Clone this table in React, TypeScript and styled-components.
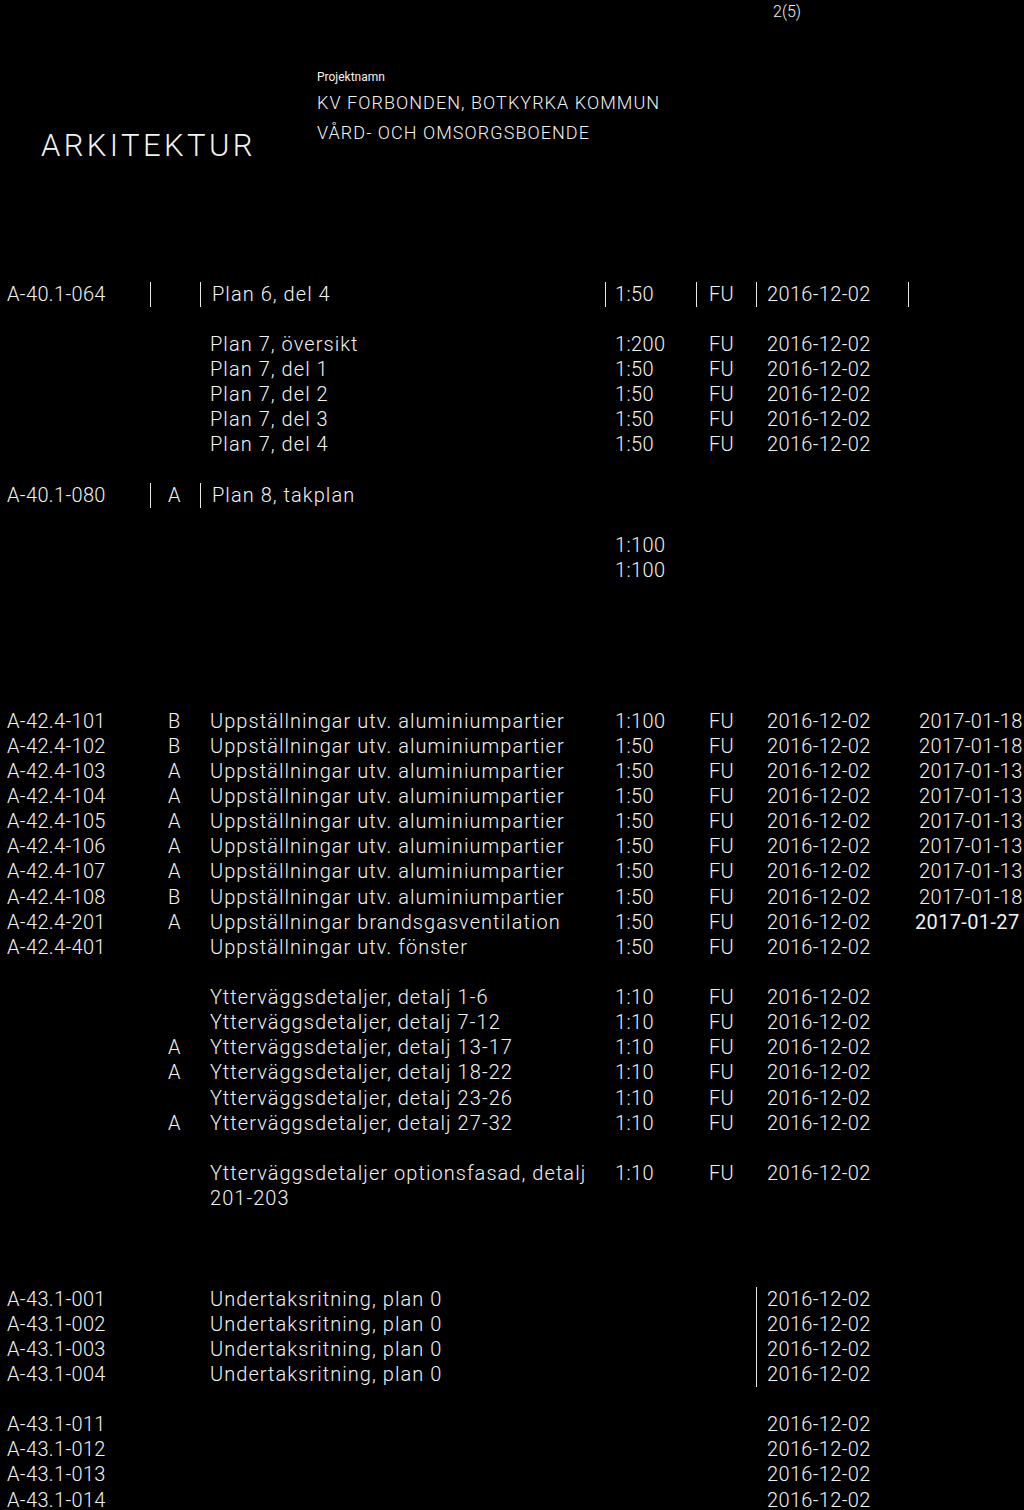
import styled, { createGlobalStyle } from "styled-components";

const GlobalStyle = createGlobalStyle`
  html, body {
    margin: 0;
    padding: 0;
    background: #000;
  }
  body {
    font-family: Roboto, "Liberation Sans", sans-serif;
    font-weight: 300;
    color: #f2f2f2;
  }
`;

const ROW_HEIGHT = "25.125px";

const Page = styled.div`
  width: 1024px;
  height: 1510px;
  overflow: hidden;
  background: #000;
  padding-left: 6px;
  box-sizing: border-box;
`;

const PageNumber = styled.div`
  height: 24px;
  line-height: 24px;
  padding-left: 767px;
  font-size: 16px;
`;

const ProjectHeader = styled.header`
  display: grid;
  grid-template-columns: 311px 1fr;
  margin-top: 45px;
  height: 212.5px;
  align-items: start;
`;

const Discipline = styled.div`
  margin-top: 59px;
  padding-left: 35px;
  font-size: 31px;
  line-height: 36px;
  letter-spacing: 3.4px;
`;

const ProjectInfo = styled.div`
  display: flex;
  flex-direction: column;
`;

const ProjectLabel = styled.div`
  font-size: 12px;
  line-height: 16px;
  font-weight: 400;
`;

const ProjectLine = styled.div<{ $height: number }>`
  font-size: 18px;
  line-height: ${({ $height }) => $height}px;
  letter-spacing: 1.05px;
`;

const Register = styled.div`
  display: flex;
  flex-direction: column;
`;

const Row = styled.div`
  display: grid;
  grid-template-columns: 144px 50px 405px 91px 60px 152px 1fr;
  min-height: ${ROW_HEIGHT};
  line-height: ${ROW_HEIGHT};
  font-size: 20px;
  letter-spacing: 0.35px;
  white-space: nowrap;
`;

const Cell = styled.div<{ $pad?: number; $bar?: boolean; $strong?: boolean }>`
  box-sizing: border-box;
  padding-left: ${({ $pad = 0 }) => $pad}px;
  border-left: ${({ $bar }) => ($bar ? "1.5px solid #e6e6e6" : "1.5px solid transparent")};
  font-weight: ${({ $strong }) => ($strong ? 400 : 300)};
`;

const TitleCell = styled(Cell)`
  white-space: normal;
  padding-right: 8px;
  letter-spacing: 1.05px;
`;

type Entry = {
  num?: string;
  rev?: string;
  title?: string;
  scale?: string;
  status?: string;
  date?: string;
  revDate?: string;
  strongRevDate?: boolean;
  bars?: "all" | "lead" | "date";
};

const D = "2016-12-02";
const blank: Entry = {};
const alu = "Uppställningar utv. aluminiumpartier";
const ytter = "Ytterväggsdetaljer, detalj";

const entries: Entry[] = [
  { num: "A-40.1-064", title: "Plan 6, del 4", scale: "1:50", status: "FU", date: D, bars: "all" },
  blank,
  { title: "Plan 7, översikt", scale: "1:200", status: "FU", date: D },
  { title: "Plan 7, del 1", scale: "1:50", status: "FU", date: D },
  { title: "Plan 7, del 2", scale: "1:50", status: "FU", date: D },
  { title: "Plan 7, del 3", scale: "1:50", status: "FU", date: D },
  { title: "Plan 7, del 4", scale: "1:50", status: "FU", date: D },
  blank,
  { num: "A-40.1-080", rev: "A", title: "Plan 8, takplan", bars: "lead" },
  blank,
  { scale: "1:100" },
  { scale: "1:100" },
  blank,
  blank,
  blank,
  blank,
  blank,
  { num: "A-42.4-101", rev: "B", title: alu, scale: "1:100", status: "FU", date: D, revDate: "2017-01-18" },
  { num: "A-42.4-102", rev: "B", title: alu, scale: "1:50", status: "FU", date: D, revDate: "2017-01-18" },
  { num: "A-42.4-103", rev: "A", title: alu, scale: "1:50", status: "FU", date: D, revDate: "2017-01-13" },
  { num: "A-42.4-104", rev: "A", title: alu, scale: "1:50", status: "FU", date: D, revDate: "2017-01-13" },
  { num: "A-42.4-105", rev: "A", title: alu, scale: "1:50", status: "FU", date: D, revDate: "2017-01-13" },
  { num: "A-42.4-106", rev: "A", title: alu, scale: "1:50", status: "FU", date: D, revDate: "2017-01-13" },
  { num: "A-42.4-107", rev: "A", title: alu, scale: "1:50", status: "FU", date: D, revDate: "2017-01-13" },
  { num: "A-42.4-108", rev: "B", title: alu, scale: "1:50", status: "FU", date: D, revDate: "2017-01-18" },
  {
    num: "A-42.4-201",
    rev: "A",
    title: "Uppställningar brandsgasventilation",
    scale: "1:50",
    status: "FU",
    date: D,
    revDate: "2017-01-27",
    strongRevDate: true,
  },
  { num: "A-42.4-401", title: "Uppställningar utv. fönster", scale: "1:50", status: "FU", date: D },
  blank,
  { title: `${ytter} 1-6`, scale: "1:10", status: "FU", date: D },
  { title: `${ytter} 7-12`, scale: "1:10", status: "FU", date: D },
  { rev: "A", title: `${ytter} 13-17`, scale: "1:10", status: "FU", date: D },
  { rev: "A", title: `${ytter} 18-22`, scale: "1:10", status: "FU", date: D },
  { title: `${ytter} 23-26`, scale: "1:10", status: "FU", date: D },
  { rev: "A", title: `${ytter} 27-32`, scale: "1:10", status: "FU", date: D },
  blank,
  { title: "Ytterväggsdetaljer optionsfasad, detalj 201-203", scale: "1:10", status: "FU", date: D },
  blank,
  blank,
  blank,
  { num: "A-43.1-001", title: "Undertaksritning, plan 0", date: D, bars: "date" },
  { num: "A-43.1-002", title: "Undertaksritning, plan 0", date: D, bars: "date" },
  { num: "A-43.1-003", title: "Undertaksritning, plan 0", date: D, bars: "date" },
  { num: "A-43.1-004", title: "Undertaksritning, plan 0", date: D, bars: "date" },
  blank,
  { num: "A-43.1-011", date: D },
  { num: "A-43.1-012", date: D },
  { num: "A-43.1-013", date: D },
  { num: "A-43.1-014", date: D },
];

const RegisterRow = ({ entry }: { entry: Entry }) => {
  const all = entry.bars === "all";
  const lead = all || entry.bars === "lead";
  return (
    <Row>
      <Cell>{entry.num}</Cell>
      <Cell $pad={17} $bar={lead}>
        {entry.rev}
      </Cell>
      <TitleCell $pad={lead ? 11 : 9} $bar={lead}>
        {entry.title}
      </TitleCell>
      <Cell $pad={9} $bar={all}>
        {entry.scale}
      </Cell>
      <Cell $pad={12} $bar={all}>
        {entry.status}
      </Cell>
      <Cell $pad={10} $bar={all || entry.bars === "date"}>
        {entry.date}
      </Cell>
      <Cell $pad={entry.strongRevDate ? 6 : 10} $bar={all} $strong={entry.strongRevDate}>
        {entry.revDate}
      </Cell>
    </Row>
  );
};

const App = () => (
  <>
    <GlobalStyle />
    <Page>
      <PageNumber>2(5)</PageNumber>
      <ProjectHeader>
        <Discipline>ARKITEKTUR</Discipline>
        <ProjectInfo>
          <ProjectLabel>Projektnamn</ProjectLabel>
          <ProjectLine $height={36}>KV FORBONDEN, BOTKYRKA KOMMUN</ProjectLine>
          <ProjectLine $height={24}>VÅRD- OCH OMSORGSBOENDE</ProjectLine>
        </ProjectInfo>
      </ProjectHeader>
      <Register>
        {entries.map((entry, i) => (
          <RegisterRow key={`register-row-${i}`} entry={entry} />
        ))}
      </Register>
    </Page>
  </>
);

export default App;
